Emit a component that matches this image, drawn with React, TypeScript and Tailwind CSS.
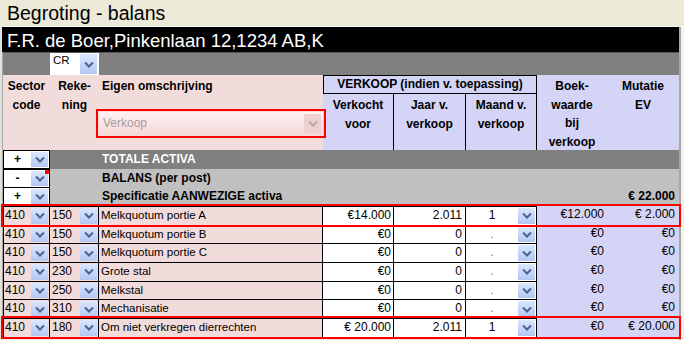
import React from 'react';

const cols = 'grid grid-cols-[47px_49px_224px_71px_72px_71px_70px_72px]';

function DropBtn({ className = '' }: { className?: string }) {
  return (
    <span className={'flex items-center justify-center w-[17px] bg-linear-to-b from-[#DCE7FC] to-[#B3C7F2] ' + className}>
      <svg width="10" height="7" viewBox="0 0 10 7">
        <polyline points="1,1.5 5,5.5 9,1.5" fill="none" stroke="#4A6292" strokeWidth="2" />
      </svg>
    </span>
  );
}

function SignBox({ sign, marker }: { sign: string; marker?: boolean }) {
  return (
    <div className="relative flex items-stretch border border-black bg-white py-[1px] pr-[1px]">
      <span className="flex-1 text-center text-[12px] font-bold leading-[15px]">{sign}</span>
      <DropBtn />
      {marker && <span className="absolute right-0 top-0 w-[4px] h-[4px] bg-[#FF0000]" />}
    </div>
  );
}

type Row = {
  s: string;
  r: string;
  d: string;
  v: string;
  j: string;
  m: string;
  b: string;
  e: string;
  hl?: boolean;
};

const rows: Row[] = [
  { s: '410', r: '150', d: 'Melkquotum portie A', v: '€14.000', j: '2.011', m: '1', b: '€12.000', e: '€ 2.000', hl: true },
  { s: '410', r: '150', d: 'Melkquotum portie B', v: '€0', j: '0', m: '.', b: '€0', e: '€0' },
  { s: '410', r: '150', d: 'Melkquotum portie C', v: '€0', j: '0', m: '.', b: '€0', e: '€0' },
  { s: '410', r: '230', d: 'Grote stal', v: '€0', j: '0', m: '.', b: '€0', e: '€0' },
  { s: '410', r: '250', d: 'Melkstal', v: '€0', j: '0', m: '.', b: '€0', e: '€0' },
  { s: '410', r: '310', d: 'Mechanisatie', v: '€0', j: '0', m: '.', b: '€0', e: '€0' },
  { s: '410', r: '180', d: 'Om niet verkregen dierrechten', v: '€ 20.000', j: '2.011', m: '1', b: '€0', e: '€ 20.000', hl: true },
];

export default function App() {
  return (
    <div className="w-[684px] h-[340px] overflow-hidden bg-[#ECE9D8] font-['Liberation_Sans',Arial,sans-serif] text-black">
      <div className="h-[27px] pl-[7px] pt-[1px] text-[19.5px] leading-[25px] border-b border-[#F8F8F4]">
        Begroting - balans
      </div>

      <div className="flex h-[313px]">
        <div className="w-[2px] bg-[#E4E2D8]" />

        <div className="w-[677px] flex flex-col">
          <div className="h-[25px] bg-black text-white text-[18.5px] leading-[25px] pl-[5px] pt-[1px]">
            F.R. de Boer,Pinkenlaan 12,1234 AB,K
          </div>

          <div className="border-l border-[#A8A8A8]">
            {/* client code row */}
            <div className={`${cols} h-[23px] bg-[#808080] border-t border-[#5A5A5A]`}>
              <div />
              <div className="flex bg-white pl-[3px] pr-[2px] py-[1px]">
                <span className="flex-1 text-[11.5px] leading-[13px]">CR</span>
                <DropBtn />
              </div>
            </div>

            {/* column headers */}
            <div className={`${cols} grid-rows-[19px_56px] h-[75px] text-[12px] font-bold leading-[18.5px]`}>
              <div className="row-span-2 bg-[#F2DCDB] text-center pt-[2px]">
                Sector
                <br />
                code
              </div>
              <div className="row-span-2 bg-[#F2DCDB] text-center pt-[2px]">
                Reke-
                <br />
                ning
              </div>
              <div className="row-span-2 bg-[#F2DCDB] pt-[2px] flex flex-col">
                <span className="pl-[3px]">Eigen omschrijving</span>
                <div className="relative z-10 mt-[16px] h-[23px] flex outline-2 outline-offset-1 outline-[#FF0000] bg-linear-to-b from-[#FDF3F3] to-[#F5D6D6]">
                  <span className="flex-1 pl-[4px] text-[12px] font-normal leading-[23px] text-[#A89C9C]">Verkoop</span>
                  <span className="flex items-center justify-center w-[17px] my-[2px] mr-[2px] bg-[#EFD0D0]">
                    <svg width="10" height="7" viewBox="0 0 10 7">
                      <polyline points="1,1.5 5,5.5 9,1.5" fill="none" stroke="#B8A8A8" strokeWidth="2" />
                    </svg>
                  </span>
                </div>
              </div>
              <div className="col-span-3 bg-[#D4D4F6] border border-black text-center leading-[17px]">
                VERKOOP (indien v. toepassing)
              </div>
              <div className="row-span-2 bg-[#D4D4F6] text-center pt-[2px]">
                Boek-
                <br />
                waarde
                <br />
                bij
                <br />
                verkoop
              </div>
              <div className="row-span-2 bg-[#D4D4F6] text-center pt-[2px]">
                Mutatie
                <br />
                EV
              </div>
              <div className="bg-[#D4D4F6] text-center pt-[2px] border-r border-black">
                Verkocht
                <br />
                voor
              </div>
              <div className="bg-[#D4D4F6] text-center pt-[2px] border-r border-black">
                Jaar v.
                <br />
                verkoop
              </div>
              <div className="bg-[#D4D4F6] text-center pt-[2px] border-r border-black">
                Maand v.
                <br />
                verkoop
              </div>
            </div>

            {/* section rows */}
            <div className={`${cols} h-[18.67px] bg-[#808080] text-[12px] font-bold`}>
              <SignBox sign="+" />
              <div />
              <div className="col-span-6 pl-[3px] leading-[18.67px] text-white">TOTALE ACTIVA</div>
            </div>
            <div className={`${cols} h-[18.67px] bg-[#C0C0C0] text-[12px] font-bold`}>
              <SignBox sign="-" marker />
              <div />
              <div className="col-span-6 pl-[3px] leading-[18.67px]">BALANS (per post)</div>
            </div>
            <div className={`${cols} h-[18.67px] bg-[#C0C0C0] text-[12px] font-bold`}>
              <SignBox sign="+" />
              <div />
              <div className="col-span-5 pl-[3px] leading-[18.67px]">Specificatie AANWEZIGE activa</div>
              <div className="text-right pr-[4px] leading-[18.67px]">€ 22.000</div>
            </div>

            {/* data rows */}
            {rows.map((row, i) => (
              <div
                key={i}
                className={`${cols} h-[18.67px] text-[12px] leading-[17px] ${row.hl ? 'relative z-10 outline-2 outline-[#FF0000]' : ''}`}
              >
                <div className="flex border-l border-t border-r border-black bg-[#F2DCDB] pl-[1px] pr-[1px] py-[1px]">
                  <span className="flex-1 leading-[15px]">{row.s}</span>
                  <DropBtn />
                </div>
                <div className="flex border-t border-r border-black bg-[#F2DCDB] pl-[2px] pr-[1px] py-[1px]">
                  <span className="flex-1 leading-[15px]">{row.r}</span>
                  <DropBtn />
                </div>
                <div className="border-t border-r border-black bg-[#F2DCDB] pl-[2px] text-[11.5px]">{row.d}</div>
                <div className="border-t border-r border-black bg-white text-right pr-[2px]">{row.v}</div>
                <div className="border-t border-r border-black bg-white text-right pr-[3px]">{row.j}</div>
                <div className="flex border-t border-r border-black bg-white pr-[1px] py-[1px]">
                  <span className={`flex-1 text-center leading-[15px] ${row.m === '.' ? 'text-[#808080]' : ''}`}>{row.m}</span>
                  <DropBtn />
                </div>
                <div className="bg-[#D4D4F6] text-right pr-[3px]">{row.b}</div>
                <div className="bg-[#D4D4F6] text-right pr-[4px]">{row.e}</div>
              </div>
            ))}
          </div>
        </div>

        <div className="w-[2px] bg-[#A8A8A8]" />
        <div className="flex-1 bg-[#F2F1EC]" />
      </div>
    </div>
  );
}
